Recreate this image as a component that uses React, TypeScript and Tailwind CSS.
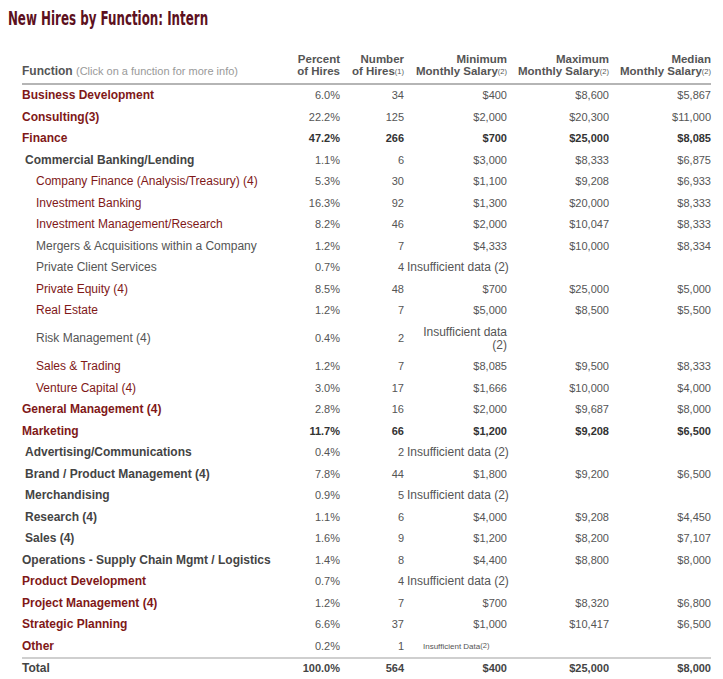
type Row = {
  name: string
  level: 0 | 1 | 2
  link?: boolean
  bold?: boolean
  strong?: boolean
  pct: string
  num: string
  min?: string
  max?: string
  med?: string
  insuff?: 'inline' | 'wrap' | 'small'
}

const rows: Row[] = [
  { name: 'Business Development', level: 0, link: true, bold: true, pct: '6.0%', num: '34', min: '$400', max: '$8,600', med: '$5,867' },
  { name: 'Consulting(3)', level: 0, link: true, bold: true, pct: '22.2%', num: '125', min: '$2,000', max: '$20,300', med: '$11,000' },
  { name: 'Finance', level: 0, link: true, bold: true, strong: true, pct: '47.2%', num: '266', min: '$700', max: '$25,000', med: '$8,085' },
  { name: 'Commercial Banking/Lending', level: 1, bold: true, pct: '1.1%', num: '6', min: '$3,000', max: '$8,333', med: '$6,875' },
  { name: 'Company Finance (Analysis/Treasury) (4)', level: 2, link: true, pct: '5.3%', num: '30', min: '$1,100', max: '$9,208', med: '$6,933' },
  { name: 'Investment Banking', level: 2, link: true, pct: '16.3%', num: '92', min: '$1,300', max: '$20,000', med: '$8,333' },
  { name: 'Investment Management/Research', level: 2, link: true, pct: '8.2%', num: '46', min: '$2,000', max: '$10,047', med: '$8,333' },
  { name: 'Mergers & Acquisitions within a Company', level: 2, pct: '1.2%', num: '7', min: '$4,333', max: '$10,000', med: '$8,334' },
  { name: 'Private Client Services', level: 2, pct: '0.7%', num: '4', insuff: 'inline' },
  { name: 'Private Equity (4)', level: 2, link: true, pct: '8.5%', num: '48', min: '$700', max: '$25,000', med: '$5,000' },
  { name: 'Real Estate', level: 2, link: true, pct: '1.2%', num: '7', min: '$5,000', max: '$8,500', med: '$5,500' },
  { name: 'Risk Management (4)', level: 2, pct: '0.4%', num: '2', insuff: 'wrap' },
  { name: 'Sales & Trading', level: 2, link: true, pct: '1.2%', num: '7', min: '$8,085', max: '$9,500', med: '$8,333' },
  { name: 'Venture Capital (4)', level: 2, link: true, pct: '3.0%', num: '17', min: '$1,666', max: '$10,000', med: '$4,000' },
  { name: 'General Management (4)', level: 0, link: true, bold: true, pct: '2.8%', num: '16', min: '$2,000', max: '$9,687', med: '$8,000' },
  { name: 'Marketing', level: 0, link: true, bold: true, strong: true, pct: '11.7%', num: '66', min: '$1,200', max: '$9,208', med: '$6,500' },
  { name: 'Advertising/Communications', level: 1, bold: true, pct: '0.4%', num: '2', insuff: 'inline' },
  { name: 'Brand / Product Management (4)', level: 1, bold: true, pct: '7.8%', num: '44', min: '$1,800', max: '$9,200', med: '$6,500' },
  { name: 'Merchandising', level: 1, bold: true, pct: '0.9%', num: '5', insuff: 'inline' },
  { name: 'Research (4)', level: 1, bold: true, pct: '1.1%', num: '6', min: '$4,000', max: '$9,208', med: '$4,450' },
  { name: 'Sales (4)', level: 1, bold: true, pct: '1.6%', num: '9', min: '$1,200', max: '$8,200', med: '$7,107' },
  { name: 'Operations - Supply Chain Mgmt / Logistics', level: 0, bold: true, pct: '1.4%', num: '8', min: '$4,400', max: '$8,800', med: '$8,000' },
  { name: 'Product Development', level: 0, link: true, bold: true, pct: '0.7%', num: '4', insuff: 'inline' },
  { name: 'Project Management (4)', level: 0, link: true, bold: true, pct: '1.2%', num: '7', min: '$700', max: '$8,320', med: '$6,800' },
  { name: 'Strategic Planning', level: 0, link: true, bold: true, pct: '6.6%', num: '37', min: '$1,000', max: '$10,417', med: '$6,500' },
  { name: 'Other', level: 0, link: true, bold: true, pct: '0.2%', num: '1', insuff: 'small' },
]

const cols = 'grid grid-cols-[274px_44px_64px_103px_102px_102px] items-center'

function Sup({ n }: { n: number }) {
  return <sup className="text-[7.5px] relative -top-[1px] font-normal">({n})</sup>
}

function DataRow({ r }: { r: Row }) {
  const indent = r.level === 0 ? 'pl-0' : r.level === 1 ? 'pl-[3px]' : 'pl-[14px]'
  const nameColor = r.link ? 'text-[#801818]' : r.bold ? 'text-[#444]' : 'text-[#555]'
  const valCls = r.strong ? 'font-bold text-[#333]' : 'text-[#555]'
  const tall = r.insuff === 'wrap'
  return (
    <div className={`${cols} ${tall ? 'h-[34.5px]' : 'h-[21.5px]'}`}>
      <div className={`${indent} ${nameColor} ${r.bold ? 'font-bold' : ''} text-[12px] whitespace-nowrap`}>{r.name}</div>
      <div className={`text-right ${valCls}`}>{r.pct}</div>
      <div className={`text-right ${valCls}`}>{r.num}</div>
      {r.insuff === 'inline' && (
        <div className="col-span-3 pl-[3px] text-[12px] text-[#555] whitespace-nowrap">Insufficient data (2)</div>
      )}
      {r.insuff === 'wrap' && (
        <div className="text-right text-[12px] text-[#555] leading-[13px] whitespace-nowrap">
          Insufficient data
          <br />
          (2)
        </div>
      )}
      {r.insuff === 'small' && (
        <div className="pl-[19px] text-[8px] text-[#555] whitespace-nowrap">
          Insufficient Data<Sup n={2} />
        </div>
      )}
      {!r.insuff && (
        <>
          <div className={`text-right ${valCls}`}>{r.min}</div>
          <div className={`text-right ${valCls}`}>{r.max}</div>
          <div className={`text-right ${valCls}`}>{r.med}</div>
        </>
      )}
    </div>
  )
}

export default function App() {
  return (
    <main className="w-[723px] h-[679px] bg-white overflow-hidden font-['Liberation_Sans',Arial,sans-serif] text-[11px] leading-[13px]">
      {/* Title */}
      <h1 className="pl-[12px] pt-[6px] h-[53px] font-['Liberation_Sans_Narrow','DejaVu_Sans_Condensed',sans-serif] font-bold text-[20px] leading-[24px] text-[#5c1020] origin-left scale-x-[0.66] whitespace-nowrap">
        New Hires by Function: Intern
      </h1>

      <div className="pl-[22px] w-[711px]">
        {/* Header */}
        <div className={`${cols} items-end pb-[6px] border-b-2 border-[#b5b5b5] text-[#555] text-[11.5px] font-bold leading-[12px]`}>
          <div className="whitespace-nowrap text-[12px]">
            Function <span className="font-normal text-[11px] text-[#999]">(Click on a function for more info)</span>
          </div>
          <div className="text-right whitespace-nowrap -ml-[10px]">
            Percent
            <br />
            of Hires
          </div>
          <div className="text-right whitespace-nowrap">
            Number
            <br />
            of Hires<Sup n={1} />
          </div>
          <div className="text-right whitespace-nowrap">
            Minimum
            <br />
            Monthly Salary<Sup n={2} />
          </div>
          <div className="text-right whitespace-nowrap">
            Maximum
            <br />
            Monthly Salary<Sup n={2} />
          </div>
          <div className="text-right whitespace-nowrap">
            Median
            <br />
            Monthly Salary<Sup n={2} />
          </div>
        </div>

        {rows.map((r) => (
          <DataRow key={r.name} r={r} />
        ))}

        {/* Total */}
        <div className={`${cols} h-[21.5px] border-t-2 border-[#cfcfcf] font-bold text-[#444]`}>
          <div className="text-[12px]">Total</div>
          <div className="text-right">100.0%</div>
          <div className="text-right">564</div>
          <div className="text-right">$400</div>
          <div className="text-right">$25,000</div>
          <div className="text-right">$8,000</div>
        </div>
      </div>
    </main>
  )
}
